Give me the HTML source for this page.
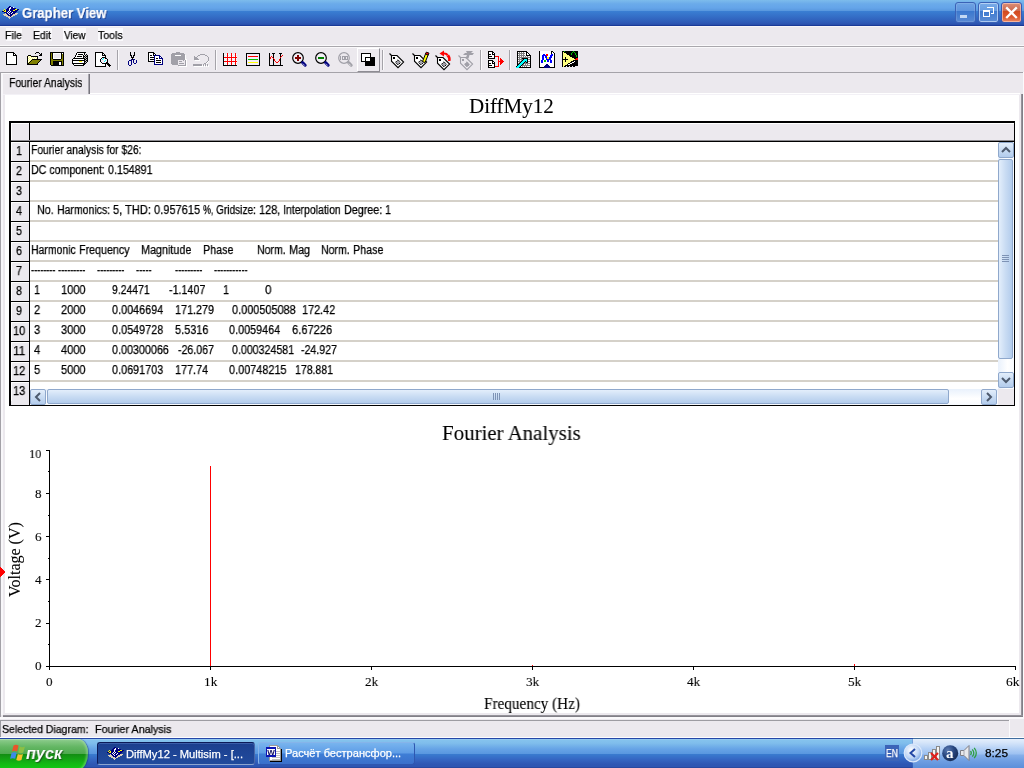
<!DOCTYPE html>
<html lang="ru"><head><meta charset="utf-8"><title>Grapher View</title>
<style>
html,body{margin:0;padding:0;background:#ECE9EE;}
#scr{position:relative;width:1024px;height:768px;overflow:hidden;background:#ECE9EE;}
#scr div,#scr svg,#scr span{position:absolute;}
.t{will-change:transform;white-space:pre;line-height:normal;transform-origin:0 0;color:#000;}
.s{font-family:"Liberation Sans",sans-serif;-webkit-text-stroke:0.25px currentColor;}
.r{font-family:"Liberation Serif",serif;-webkit-text-stroke:0.1px currentColor;}
svg{overflow:visible;}
.ce{shape-rendering:crispEdges;}
#title{left:0;top:0;width:1024px;height:26px;background:linear-gradient(to bottom,#7DBCEC 0px,#6AAAEA 4px,#64A4E9 8px,#5A99DF 10.5px,#3A7FD3 11px,#3570C8 16px,#2E59B5 23px,#2A50AC 24.5px,#1A3A98 25px,#1A3A98 26px);}
.cb{top:2px;width:20px;height:20px;border-radius:3px;box-sizing:border-box;}
#task{left:0;top:738px;width:1024px;height:30px;background:linear-gradient(to bottom,#2647A8 0px,#2647A8 1px,#9CCCF2 1px,#84C2ED 2.5px,#80BEEC 5px,#66A3E6 11px,#5A98E0 15.5px,#397CD0 16px,#3568C4 21px,#2E57B4 26px,#2D55B2 28.5px,#28489F 29px);}
#tray{left:913px;top:739px;width:111px;height:29px;background:linear-gradient(to bottom,#E4EEFC 0px,#D4E4F9 4px,#B4D0F5 10px,#9DC1F1 15px,#86B0EA 16px,#6E9EE2 22px,#5C8FDA 29px);}
.tb{top:742px;height:23px;border-radius:3px;box-sizing:border-box;}
.row{left:30px;width:968px;height:2px;background:#D5D1C9;}
.rn{left:11px;width:18px;height:19px;background:#EBE9EE;border-top:1px solid #fff;border-left:1px solid #fff;box-sizing:border-box;}
.rl{left:11px;width:18px;height:1px;background:#000;}

</style></head>
<body>
<div id="scr">
<div id="title"></div><div style="left:0;top:26px;width:1024px;height:1px;background:#F7F5F8"></div><div class="cb" style="left:955px;width:21px;height:21px;background:linear-gradient(#6FA3E4 0,#5F95DD 41%,#3B78CE 44%,#5889D3 100%);border:1px solid #3A62B6;box-shadow:inset 0 0 0 1px rgba(255,255,255,.12)"></div><div style="left:960px;top:15px;width:7px;height:3px;background:#C4D9F4"></div><div class="cb" style="left:978px;width:21px;height:21px;background:linear-gradient(#79ACE8 0,#669CE1 41%,#3F7BD0 44%,#5C8DD5 100%);border:1px solid #3A62B6;box-shadow:inset 0 0 0 1px rgba(200,222,248,.75)"></div><svg class="ce" style="left:979px;top:2px" width="20" height="20"><path d="M8 5.5h6v6h-2" fill="none" stroke="#fff" stroke-width="1"/><rect x="4.5" y="8.5" width="6" height="6" fill="none" stroke="#fff" stroke-width="1"/><rect x="4" y="8" width="7" height="2" fill="#fff"/><rect x="7.5" y="4.7" width="7" height="1.6" fill="#fff"/></svg><div class="cb" style="left:1001px;width:21px;height:21px;background:linear-gradient(#DC8F78 0,#CC6A4F 41%,#D24A20 44%,#DC5A30 75%,#EA8864 100%);border:1px solid #3A58B0;box-shadow:inset 0 0 0 1px rgba(255,214,196,.6)"></div><svg style="left:1001px;top:2px" width="21" height="21"><path d="M5.200 5.400l10.600 10.600M15.800 5.400l-10.600 10.600" stroke="#fff" stroke-width="2.300" stroke-linecap="butt"/></svg><div style="left:6px;top:28px;width:16px;height:13px;background:#FAF9FC"></div><div style="left:34px;top:28px;width:18px;height:13px;background:#FAF9FC"></div><div style="left:63px;top:28px;width:23px;height:13px;background:#FAF9FC"></div><div style="left:98px;top:28px;width:25px;height:13px;background:#FAF9FC"></div><div style="left:0;top:45px;width:1024px;height:1px;background:#FAF9FB"></div><div style="left:0;top:46px;width:1024px;height:1px;background:#A9A7AC"></div><div style="left:0;top:47px;width:1024px;height:1px;background:#FAF9FB"></div><div style="left:117px;top:50px;width:1px;height:20px;background:#A5A3A9"></div><div style="left:118px;top:50px;width:1px;height:20px;background:#FBFAFC"></div><div style="left:215px;top:50px;width:1px;height:20px;background:#A5A3A9"></div><div style="left:216px;top:50px;width:1px;height:20px;background:#FBFAFC"></div><div style="left:382px;top:50px;width:1px;height:20px;background:#A5A3A9"></div><div style="left:383px;top:50px;width:1px;height:20px;background:#FBFAFC"></div><div style="left:480px;top:50px;width:1px;height:20px;background:#A5A3A9"></div><div style="left:481px;top:50px;width:1px;height:20px;background:#FBFAFC"></div><div style="left:509px;top:50px;width:1px;height:20px;background:#A5A3A9"></div><div style="left:510px;top:50px;width:1px;height:20px;background:#FBFAFC"></div><svg class="ce" style="left:0;top:0" width="1" height="1"><path d="M6 52.5h8M6 53.5h1M13 53.5h2M6 54.5h1M13 54.5h1M15 54.5h1M6 55.5h1M13 55.5h4M6 56.5h1M16 56.5h1M6 57.5h1M16 57.5h1M6 58.5h1M16 58.5h1M6 59.5h1M16 59.5h1M6 60.5h1M16 60.5h1M6 61.5h1M16 61.5h1M6 62.5h1M16 62.5h1M6 63.5h1M16 63.5h1M6 64.5h11" stroke="#000"/><path d="M7 53.5h6M7 54.5h6M14 54.5h1M7 55.5h6M7 56.5h9M7 57.5h9M7 58.5h9M7 59.5h9M7 60.5h9M7 61.5h9M7 62.5h9M7 63.5h9" stroke="#fff"/></svg><svg class="ce" style="left:0;top:0" width="1" height="1"><path d="M36 52.5h3M35 53.5h1M39 53.5h1M41 53.5h1M40 54.5h2M28 55.5h3M39 55.5h3M27 56.5h1M31 56.5h7M27 57.5h1M37 57.5h1M27 58.5h1M37 58.5h1M27 59.5h1M32 59.5h10M27 60.5h1M31 60.5h1M40 60.5h1M27 61.5h1M30 61.5h1M39 61.5h1M27 62.5h1M29 62.5h1M38 62.5h1M27 63.5h2M37 63.5h1M27 64.5h11" stroke="#000"/><path d="M28 56.5h1M30 56.5h1M29 57.5h1M31 57.5h1M33 57.5h1M35 57.5h1M28 58.5h1M30 58.5h1M32 58.5h1M34 58.5h1M36 58.5h1M29 59.5h1M31 59.5h1M28 60.5h1M30 60.5h1M29 61.5h1M28 62.5h1" stroke="#FFFF80"/><path d="M29 56.5h1M28 57.5h1M30 57.5h1M32 57.5h1M34 57.5h1M36 57.5h1M29 58.5h1M31 58.5h1M33 58.5h1M35 58.5h1M28 59.5h1M30 59.5h1M29 60.5h1M28 61.5h1" stroke="#fff"/><path d="M32 60.5h8M31 61.5h8M30 62.5h8M29 63.5h8" stroke="#808000"/></svg><svg class="ce" style="left:0;top:0" width="1" height="1"><path d="M50 52.5h14M50 53.5h1M52 53.5h1M61 53.5h1M63 53.5h1M50 54.5h1M52 54.5h1M61 54.5h1M63 54.5h1M50 55.5h1M52 55.5h1M61 55.5h1M63 55.5h1M50 56.5h1M52 56.5h1M61 56.5h1M63 56.5h1M50 57.5h1M52 57.5h1M61 57.5h1M63 57.5h1M50 58.5h1M52 58.5h1M61 58.5h1M63 58.5h1M50 59.5h1M53 59.5h8M63 59.5h1M50 60.5h1M63 60.5h1M50 61.5h1M53 61.5h9M63 61.5h1M50 62.5h1M53 62.5h6M61 62.5h1M63 62.5h1M50 63.5h1M53 63.5h6M61 63.5h1M63 63.5h1M50 64.5h1M53 64.5h6M61 64.5h1M63 64.5h1M51 65.5h13" stroke="#000"/><path d="M51 53.5h1M51 54.5h1M62 54.5h1M51 55.5h1M62 55.5h1M51 56.5h1M62 56.5h1M51 57.5h1M62 57.5h1M51 58.5h1M62 58.5h1M51 59.5h2M61 59.5h2M51 60.5h12M51 61.5h2M62 61.5h1M51 62.5h2M62 62.5h1M51 63.5h2M62 63.5h1M51 64.5h2M62 64.5h1" stroke="#808000"/><path d="M53 53.5h8M53 54.5h1M60 54.5h1M53 55.5h1M60 55.5h1M53 56.5h1M60 56.5h1M53 57.5h1M60 57.5h1M53 58.5h8" stroke="#fff"/><path d="M62 53.5h1M59 62.5h2M59 63.5h2M59 64.5h2" stroke="#fff"/><path d="M54 54.5h6M54 55.5h6M54 56.5h6M54 57.5h6" stroke="#ECE9EE"/></svg><svg class="ce" style="left:0;top:0" width="1" height="1"><path d="M77 52.5h9M76 53.5h1M84 53.5h1M76 54.5h1M78 54.5h5M84 54.5h1M86 54.5h1M75 55.5h1M83 55.5h1M85 55.5h1M87 55.5h1M75 56.5h1M77 56.5h5M83 56.5h2M86 56.5h2M74 57.5h1M83 57.5h1M85 57.5h1M87 57.5h1M73 58.5h12M86 58.5h2M72 59.5h1M84 59.5h2M87 59.5h1M72 60.5h13M86 60.5h2M72 61.5h1M84 61.5h2M87 61.5h1M72 62.5h1M84 62.5h1M86 62.5h1M72 63.5h14M73 64.5h1M83 64.5h2M74 65.5h10" stroke="#000"/><path d="M77 53.5h7M77 54.5h1M83 54.5h1M76 55.5h7M76 56.5h1M82 56.5h1M75 57.5h8M73 59.5h11M73 61.5h6M82 61.5h2M73 62.5h11M74 64.5h9" stroke="#fff"/><path d="M86 55.5h1M85 56.5h1M84 57.5h1M86 57.5h1M85 58.5h1M86 59.5h1M85 60.5h1M86 61.5h1M85 62.5h1" stroke="#C0C0C0"/><path d="M79 61.5h3" stroke="#FFFF00"/></svg><svg class="ce" style="left:0;top:0" width="1" height="1"><path d="M95 52.5h8M95 53.5h1M102 53.5h2M95 54.5h1M102 54.5h1M104 54.5h1M95 55.5h1M102 55.5h4M95 56.5h1M105 56.5h1M95 57.5h1M102 57.5h4M95 58.5h1M101 58.5h1M105 58.5h2M95 59.5h1M100 59.5h1M107 59.5h1M95 60.5h1M100 60.5h1M107 60.5h1M95 61.5h1M100 61.5h1M107 61.5h1M95 62.5h1M101 62.5h1M106 62.5h2M95 63.5h1M102 63.5h7M95 64.5h1M105 64.5h1M107 64.5h3M95 65.5h1M105 65.5h1M108 65.5h3M95 66.5h11M109 66.5h1" stroke="#000"/><path d="M96 53.5h6M96 54.5h6M103 54.5h1M96 55.5h6M96 56.5h9M96 57.5h6M96 58.5h5M96 59.5h4M96 60.5h4M96 61.5h4M96 62.5h5M96 63.5h6M96 64.5h9M96 65.5h9" stroke="#fff"/><path d="M102 58.5h1M104 58.5h1M101 59.5h1M103 59.5h4M101 60.5h4M106 60.5h1M101 61.5h3M105 61.5h2M102 62.5h4" stroke="#F4EEF8"/><path d="M103 58.5h1M102 59.5h1M105 60.5h1M104 61.5h1" stroke="#00FFFF"/></svg><svg class="ce" style="left:0;top:0" width="1" height="1"><path d="M130 52.5h1M134 52.5h1M130 53.5h1M134 53.5h1M130 54.5h1M134 54.5h1M130 55.5h2M133 55.5h2M131 56.5h1M133 56.5h1M131 57.5h3M132 58.5h1M132 59.5h1" stroke="#000"/><path d="M131 59.5h1M133 59.5h2M129 60.5h3M133 60.5h1M136 60.5h1M128 61.5h1M131 61.5h1M133 61.5h1M136 61.5h1M128 62.5h1M131 62.5h1M133 62.5h1M136 62.5h1M128 63.5h1M131 63.5h1M134 63.5h2M128 64.5h1M131 64.5h1M129 65.5h2" stroke="#000080"/></svg><svg class="ce" style="left:0;top:0" width="1" height="1"><path d="M148 52.5h6M148 53.5h1M153 53.5h2M148 54.5h1M153 54.5h1M155 54.5h1M148 55.5h1M150 55.5h2M153 55.5h1M148 56.5h1M148 57.5h1M150 57.5h4M148 58.5h1M156 58.5h2M148 59.5h1M150 59.5h4M148 60.5h1M156 60.5h5M148 61.5h6M156 62.5h5" stroke="#000"/><path d="M149 53.5h4M149 54.5h4M154 54.5h1M149 55.5h1M152 55.5h1M149 56.5h5M155 56.5h4M149 57.5h1M155 57.5h4M160 57.5h1M149 58.5h5M155 58.5h1M158 58.5h1M149 59.5h1M155 59.5h7M149 60.5h5M155 60.5h1M161 60.5h1M155 61.5h7M155 62.5h1M161 62.5h1M155 63.5h7" stroke="#fff"/><path d="M154 55.5h6M154 56.5h1M159 56.5h2M154 57.5h1M159 57.5h1M161 57.5h1M154 58.5h1M159 58.5h4M154 59.5h1M162 59.5h1M154 60.5h1M162 60.5h1M154 61.5h1M162 61.5h1M154 62.5h1M162 62.5h1M154 63.5h1M162 63.5h1M154 64.5h9" stroke="#000080"/></svg><svg class="ce" style="left:0;top:0" width="1" height="1"><path d="M176 52.5h4M172 53.5h12M171 54.5h14M171 55.5h4M181 55.5h4M171 56.5h14M171 57.5h14M171 58.5h14M171 59.5h14M171 60.5h7M183 60.5h1M185 60.5h1M171 61.5h7M179 61.5h3M185 61.5h1M171 62.5h7M185 62.5h1M171 63.5h7M179 63.5h5M185 63.5h1M172 64.5h6M185 64.5h1M178 65.5h8" stroke="#A1A0A8"/><path d="M175 55.5h6" stroke="#fff"/><path d="M185 55.5h1M185 56.5h1M185 57.5h1M185 58.5h1M185 59.5h2M186 60.5h1M186 61.5h1M186 62.5h1M186 63.5h1M186 64.5h1M186 65.5h1M179 66.5h8" stroke="#fff"/><path d="M178 60.5h5M184 60.5h1M178 61.5h1M182 61.5h3M178 62.5h7M178 63.5h1M184 63.5h1M178 64.5h7" stroke="#ECE9EE"/></svg><svg class="ce" style="left:0;top:0" width="1" height="1"><path d="M200 54.5h5M198 55.5h2M205 55.5h2M194 56.5h1M197 56.5h1M207 56.5h1M194 57.5h3M208 57.5h1M194 58.5h4M208 58.5h1M194 59.5h5M208 59.5h1M208 60.5h1M207 61.5h1M206 62.5h1M204 63.5h2M193 64.5h9M203 64.5h1M205 64.5h1M207 64.5h1M193 65.5h9M203 65.5h1M205 65.5h1M207 65.5h1" stroke="#A1A0A8"/><path d="M195 60.5h5M208 61.5h1M207 62.5h1M206 63.5h1M202 65.5h1M204 65.5h1M206 65.5h1M208 65.5h1M194 66.5h9M204 66.5h1M206 66.5h1M208 66.5h1" stroke="#fff"/></svg><svg class="ce" style="left:0;top:0" width="1" height="1"><path d="M223 53.5h1M223 54.5h1M223 55.5h1M223 56.5h1M223 57.5h1M223 58.5h1M223 59.5h1M223 60.5h1M223 61.5h1M223 62.5h1M223 63.5h1M223 64.5h1M223 65.5h14" stroke="#000"/><path d="M227 53.5h1M231 53.5h1M235 53.5h1M227 54.5h1M231 54.5h1M235 54.5h1M227 55.5h1M231 55.5h1M235 55.5h1M227 56.5h1M231 56.5h1M235 56.5h1M224 57.5h13M227 58.5h1M231 58.5h1M235 58.5h1M227 59.5h1M231 59.5h1M235 59.5h1M227 60.5h1M231 60.5h1M235 60.5h1M224 61.5h13M227 62.5h1M231 62.5h1M235 62.5h1M227 63.5h1M231 63.5h1M235 63.5h1M227 64.5h1M231 64.5h1M235 64.5h1" stroke="#FF0000"/><path d="M224 54.5h1M226 54.5h1M228 54.5h1M230 54.5h1M232 54.5h1M234 54.5h1M236 54.5h1M225 55.5h1M229 55.5h1M233 55.5h1M224 56.5h1M226 56.5h1M228 56.5h1M230 56.5h1M232 56.5h1M234 56.5h1M236 56.5h1M224 58.5h1M226 58.5h1M228 58.5h1M230 58.5h1M232 58.5h1M234 58.5h1M236 58.5h1M225 59.5h1M229 59.5h1M233 59.5h1M224 60.5h1M226 60.5h1M228 60.5h1M230 60.5h1M232 60.5h1M234 60.5h1M236 60.5h1M224 62.5h1M226 62.5h1M228 62.5h1M230 62.5h1M232 62.5h1M234 62.5h1M236 62.5h1M225 63.5h1M229 63.5h1M233 63.5h1M224 64.5h1M226 64.5h1M228 64.5h1M230 64.5h1M232 64.5h1M234 64.5h1M236 64.5h1" stroke="#fff"/><path d="M225 54.5h1M229 54.5h1M233 54.5h1M224 55.5h1M226 55.5h1M228 55.5h1M230 55.5h1M232 55.5h1M234 55.5h1M236 55.5h1M225 56.5h1M229 56.5h1M233 56.5h1M225 58.5h1M229 58.5h1M233 58.5h1M224 59.5h1M226 59.5h1M228 59.5h1M230 59.5h1M232 59.5h1M234 59.5h1M236 59.5h1M225 60.5h1M229 60.5h1M233 60.5h1M225 62.5h1M229 62.5h1M233 62.5h1M224 63.5h1M226 63.5h1M228 63.5h1M230 63.5h1M232 63.5h1M234 63.5h1M236 63.5h1M225 64.5h1M229 64.5h1M233 64.5h1" stroke="#EAE8F0"/></svg><svg class="ce" style="left:0;top:0" width="1" height="1"><path d="M246 53.5h14M246 54.5h1M259 54.5h1M246 55.5h1M259 55.5h1M246 56.5h1M259 56.5h1M246 57.5h1M259 57.5h1M246 58.5h1M259 58.5h1M246 59.5h1M259 59.5h1M246 60.5h1M259 60.5h1M246 61.5h1M259 61.5h1M246 62.5h1M259 62.5h1M246 63.5h1M259 63.5h1M246 64.5h1M259 64.5h1M246 65.5h14" stroke="#000"/><path d="M247 54.5h12M247 55.5h12M247 56.5h1M258 56.5h1M247 57.5h12M247 58.5h12M247 59.5h1M258 59.5h1M247 60.5h12M247 61.5h12M247 62.5h1M258 62.5h1M247 63.5h12M247 64.5h12" stroke="#F4EEF8"/><path d="M248 56.5h10" stroke="#FF0000"/><path d="M248 59.5h10" stroke="#00C000"/><path d="M248 62.5h10" stroke="#FFFF00"/></svg><svg class="ce" style="left:0;top:0" width="1" height="1"><path d="M269 53.5h1M272 53.5h3M279 53.5h3M269 54.5h1M273 54.5h1M280 54.5h1M269 55.5h1M273 55.5h1M280 55.5h1M269 56.5h1M273 56.5h1M280 56.5h1M269 57.5h1M273 57.5h1M269 58.5h1M280 58.5h1M269 59.5h1M273 59.5h1M280 59.5h1M269 60.5h1M273 60.5h1M280 60.5h1M269 61.5h1M273 61.5h1M280 61.5h1M269 62.5h1M273 62.5h1M280 62.5h1M269 63.5h1M273 63.5h1M280 63.5h1M269 64.5h1M273 64.5h1M280 64.5h1M269 65.5h14" stroke="#000"/><path d="M282 55.5h1M271 56.5h1M281 56.5h1M270 57.5h1M272 57.5h1M280 57.5h1M270 58.5h1M273 58.5h1M274 59.5h1M279 59.5h1M274 60.5h1M279 60.5h1M275 61.5h1M278 61.5h1M276 62.5h2" stroke="#FF0000"/></svg><svg style="left:290px;top:50px" width="20" height="20"><circle cx="8" cy="8" r="5.3" fill="#F3F0F6" stroke="#000" stroke-width="1.2"/><path d="M12.6 12.6l2.600 2.600" stroke="#000080" stroke-width="3" stroke-linecap="round"/><path d="M12.800 13.600l2 2" stroke="#fff" stroke-width="0.8" opacity="0.8"/><path class="ce" d="M5 8h6M8 5v6" stroke="#800000" stroke-width="2"/></svg><svg style="left:313px;top:50px" width="20" height="20"><circle cx="8" cy="8" r="5.3" fill="#F3F0F6" stroke="#000" stroke-width="1.2"/><path d="M12.6 12.6l2.600 2.600" stroke="#000080" stroke-width="3" stroke-linecap="round"/><path d="M12.800 13.600l2 2" stroke="#fff" stroke-width="0.8" opacity="0.8"/><path class="ce" d="M5 8h6" stroke="#008000" stroke-width="2"/></svg><svg style="left:336px;top:50px" width="20" height="20"><circle cx="8" cy="8" r="5.3" fill="#ECE9EE" stroke="#A1A0A8" stroke-width="1.2"/><path d="M12.6 12.6l2.600 2.600" stroke="#A1A0A8" stroke-width="3" stroke-linecap="round"/><path d="M12.800 13.600l2 2" stroke="#fff" stroke-width="0.8" opacity="0.8"/><path class="ce" d="M4.5 6v4M6.5 6.5h2v3h-2zM9.5 6.5h2v3h-2z" stroke="#A1A0A8" fill="none"/></svg><div style="left:357px;top:48px;width:23px;height:24px;box-sizing:border-box;border-left:1px solid #fff;border-top:1px solid #fff;border-right:1px solid #8E8C93;border-bottom:1px solid #8E8C93;background:#EDEAEF"></div><svg class="ce" style="left:0;top:0" width="1" height="1"><path d="M361 53.5h10M361 54.5h1M370 54.5h1M361 55.5h1M370 55.5h1M361 56.5h1M370 56.5h1M361 57.5h1M365 57.5h10M361 58.5h1M365 58.5h1M370 58.5h5M361 59.5h1M365 59.5h1M370 59.5h5M361 60.5h1M365 60.5h1M370 60.5h5M361 61.5h14M365 62.5h10M365 63.5h10M365 64.5h10M365 65.5h10" stroke="#000"/><path d="M362 54.5h8M362 55.5h8M362 56.5h8M362 57.5h3M362 58.5h3M366 58.5h4M362 59.5h3M366 59.5h4M362 60.5h3M366 60.5h4" stroke="#fff"/></svg><svg style="left:389px;top:53px" width="18" height="18"><path d="M0.5 0.5l2 2" stroke="#000" stroke-width="1.1"/><path d="M2.5 2.5h5.5l6.6 6.6-5.6 5.6-6.5-6.5z" fill="#fff" stroke="#000" stroke-width="1.1" stroke-linejoin="miter"/><rect class="ce" x="4" y="4" width="2" height="2" fill="#000"/><path d="M9 6.8l2.6 2.6-2.6 2.6-2.6-2.6z" fill="#A1A0A8" stroke="#000" stroke-width="1" stroke-dasharray="1.5 0.8"/></svg><svg style="left:412px;top:53px" width="18" height="18"><path d="M0.5 0.5l2 2" stroke="#000" stroke-width="1.1"/><path d="M2.5 2.5h5.5l6.6 6.6-5.6 5.6-6.5-6.5z" fill="#fff" stroke="#000" stroke-width="1.1" stroke-linejoin="miter"/><rect class="ce" x="4" y="4" width="2" height="2" fill="#000"/><path d="M9 6.8l2.6 2.6-2.6 2.6-2.6-2.6z" fill="#A1A0A8" stroke="#000" stroke-width="1" stroke-dasharray="1.5 0.8"/></svg><svg style="left:412px;top:50px" width="20" height="20"><path d="M10.5 11.5l3.2-8 2.6 1-3.2 8z" fill="#FFFF00" stroke="#000" stroke-width="1"/><path d="M13.4 4l1-1.9 2.6 1-.8 2z" fill="#FF0000" stroke="#000" stroke-width="0.9"/></svg><svg style="left:435px;top:55px" width="18" height="18"><path d="M0.5 0.5l2 2" stroke="#000" stroke-width="1.1"/><path d="M2.5 2.5h5.5l6.6 6.6-5.6 5.6-6.5-6.5z" fill="#fff" stroke="#000" stroke-width="1.1" stroke-linejoin="miter"/><rect class="ce" x="4" y="4" width="2" height="2" fill="#000"/><path d="M9 6.8l2.6 2.6-2.6 2.6-2.6-2.6z" fill="#A1A0A8" stroke="#000" stroke-width="1" stroke-dasharray="1.5 0.8"/></svg><svg style="left:435px;top:50px" width="20" height="20"><path d="M4.500 3.500l4.500-3v2c2.200 0 3.600 .8 4.300 2.200l-1.800 1c-.5-.9-1.300-1.300-2.500-1.300v2z" fill="#FF0000"/><path d="M11.500 6l2.500-1.500c1.500 1.800 2 4 1.500 6.500h-2.500c.4-1.900 0-3.500-1.500-5z" fill="#FF0000"/></svg><svg style="left:458px;top:55px" width="18" height="18"><path d="M0.5 0.5l2 2" stroke="#A1A0A8" stroke-width="1.1"/><path d="M2.5 2.5h5.5l6.6 6.6-5.6 5.6-6.5-6.5z" fill="#ECE9EE" stroke="#A1A0A8" stroke-width="1.1" stroke-linejoin="miter"/><rect class="ce" x="4" y="4" width="2" height="2" fill="#A1A0A8"/><path d="M9 6.8l2.6 2.6-2.6 2.6-2.6-2.6z" fill="#A1A0A8" stroke="#A1A0A8" stroke-width="1" stroke-dasharray="1.5 0.8"/></svg><svg style="left:458px;top:50px" width="20" height="20"><path d="M8 1h7l-2 2h3l-1.5 2h-3l-1 3.5h-3l1.5-3.5h-4l2-2h2z" fill="#A1A0A8"/></svg><svg class="ce" style="left:0;top:0" width="1" height="1"><path d="M488 51.5h5M488 52.5h1M492 52.5h2M488 53.5h1M492 53.5h1M494 53.5h1M488 54.5h3M492 54.5h3M488 55.5h1M494 55.5h1M488 56.5h4M494 56.5h1M488 57.5h1M494 57.5h1M488 58.5h7M488 60.5h5M488 61.5h1M492 61.5h2M488 62.5h1M492 62.5h1M494 62.5h1M488 63.5h3M492 63.5h3M488 64.5h1M494 64.5h1M488 65.5h4M494 65.5h1M488 66.5h1M494 66.5h1M488 67.5h7" stroke="#000"/><path d="M489 52.5h3M489 53.5h3M493 53.5h1M491 54.5h1M489 55.5h5M492 56.5h2M489 57.5h5M489 61.5h3M489 62.5h3M493 62.5h1M491 63.5h1M489 64.5h5M492 65.5h2M489 66.5h5" stroke="#fff"/><path d="M495 56.5h4M498 57.5h1M498 58.5h1M500 58.5h1M498 59.5h1M500 59.5h2M498 60.5h1M500 60.5h3M498 61.5h6M498 62.5h1M500 62.5h3M498 63.5h1M500 63.5h2M498 64.5h1M500 64.5h1M498 65.5h1M495 66.5h4" stroke="#FF0000"/></svg><svg class="ce" style="left:0;top:0" width="1" height="1"><path d="M517 51.5h10M517 52.5h1M526 52.5h2M517 53.5h1M526 53.5h1M528 53.5h1M517 54.5h1M526 54.5h1M529 54.5h1M517 55.5h1M526 55.5h5M517 56.5h1M530 56.5h1M517 57.5h1M530 57.5h1M517 58.5h1M522 58.5h6M530 58.5h1M517 59.5h1M523 59.5h1M527 59.5h1M530 59.5h1M517 60.5h1M522 60.5h1M527 60.5h1M530 60.5h1M517 61.5h1M521 61.5h1M525 61.5h1M527 61.5h1M530 61.5h1M517 62.5h1M520 62.5h1M524 62.5h1M526 62.5h2M530 62.5h1M517 63.5h1M519 63.5h1M523 63.5h1M530 63.5h1M517 64.5h2M522 64.5h1M530 64.5h1M517 65.5h1M521 65.5h1M530 65.5h1M516 66.5h1M520 66.5h1M530 66.5h1M519 67.5h12" stroke="#000"/><path d="M518 52.5h1M520 52.5h1M522 52.5h1M524 52.5h2M525 53.5h1M527 53.5h1M518 54.5h1M520 54.5h1M522 54.5h1M524 54.5h2M527 54.5h2M525 55.5h1M518 56.5h1M520 56.5h1M522 56.5h1M524 56.5h1M526 56.5h1M528 56.5h2M518 58.5h1M520 58.5h1M528 58.5h2M518 60.5h1M520 60.5h1M528 60.5h2M518 62.5h1M528 62.5h2M524 64.5h1M526 64.5h1M528 64.5h2M521 66.5h1M523 66.5h1M525 66.5h1M527 66.5h3" stroke="#fff"/><path d="M519 52.5h1M521 52.5h1M523 52.5h1M518 53.5h7M519 54.5h1M521 54.5h1M523 54.5h1M518 55.5h7M519 56.5h1M521 56.5h1M523 56.5h1M525 56.5h1M527 56.5h1M518 57.5h12M519 58.5h1M521 58.5h1M518 59.5h5M528 59.5h2M519 60.5h1M521 60.5h1M518 61.5h3M528 61.5h2M519 62.5h1M525 62.5h1M518 63.5h1M524 63.5h6M523 64.5h1M525 64.5h1M527 64.5h1M522 65.5h8M522 66.5h1M524 66.5h1M526 66.5h1" stroke="#808080"/><path d="M524 59.5h3M523 60.5h4M522 61.5h3M526 61.5h1M521 62.5h3M520 63.5h3M519 64.5h3M518 65.5h3M517 66.5h3M516 67.5h3" stroke="#00FFFF"/></svg><svg class="ce" style="left:0;top:0" width="1" height="1"><path d="M539 51.5h1M551 51.5h2M539 52.5h1M551 52.5h1M553 52.5h1M539 53.5h1M551 53.5h1M554 53.5h1M539 54.5h1M554 54.5h1M539 55.5h1M554 55.5h1M539 56.5h1M554 56.5h1M539 57.5h1M554 57.5h1M539 58.5h1M554 58.5h1M539 59.5h1M554 59.5h1M539 60.5h1M554 60.5h1M539 61.5h1M554 61.5h1M539 62.5h1M554 62.5h1M539 63.5h1M554 63.5h1M539 64.5h1M554 64.5h1M539 65.5h1M554 65.5h1M539 66.5h1M554 66.5h1M539 67.5h5M550 67.5h5" stroke="#000"/><path d="M540 51.5h11M540 52.5h11M552 52.5h1M540 53.5h11M552 53.5h2M540 54.5h3M545 54.5h1M548 54.5h3M553 54.5h1M540 55.5h2M548 55.5h2M553 55.5h1M540 56.5h2M544 56.5h1M547 56.5h3M552 56.5h2M540 57.5h2M544 57.5h1M552 57.5h2M540 58.5h2M544 58.5h2M551 58.5h3M540 59.5h2M544 59.5h2M551 59.5h3M540 60.5h1M543 60.5h1M546 60.5h1M549 60.5h1M552 60.5h2M540 61.5h1M543 61.5h1M546 61.5h1M549 61.5h1M552 61.5h2M540 62.5h1M543 62.5h7M552 62.5h2M540 63.5h14M540 64.5h6M548 64.5h6M540 65.5h5M549 65.5h5M540 66.5h4M550 66.5h4" stroke="#fff"/><path d="M543 54.5h2M551 54.5h2M542 55.5h4M550 55.5h3M542 56.5h2M545 56.5h2M550 56.5h2M542 57.5h2M545 57.5h2M549 57.5h3M542 58.5h2M546 58.5h1M549 58.5h2M542 59.5h2M546 59.5h5M541 60.5h2M547 60.5h2M550 60.5h2M541 61.5h2M547 61.5h2M550 61.5h2M541 62.5h2M550 62.5h2" stroke="#0000FF"/><path d="M546 54.5h2M546 55.5h2" stroke="#FF0000"/><path d="M547 57.5h2M547 58.5h2" stroke="#FFFF00"/><path d="M544 60.5h2M544 61.5h2" stroke="#00C000"/><path d="M546 64.5h2M545 65.5h4M544 66.5h6M544 67.5h6" stroke="#000080"/></svg><svg class="ce" style="left:0;top:0" width="1" height="1"><path d="M562 51.5h2M565 51.5h8M574 51.5h4M562 52.5h1M564 52.5h8M573 52.5h1M575 52.5h3M562 53.5h1M566 53.5h5M572 53.5h3M576 53.5h2M562 54.5h1M567 54.5h4M572 54.5h3M576 54.5h2M562 55.5h1M569 55.5h7M577 55.5h1M562 56.5h1M570 56.5h6M577 56.5h1M562 57.5h1M565 57.5h1M572 57.5h6M562 58.5h1M565 58.5h1M574 58.5h2M562 59.5h6M562 60.5h1M565 60.5h1M573 60.5h5M562 61.5h1M565 61.5h1M571 61.5h3M575 61.5h3M562 62.5h1M570 62.5h2M574 62.5h4M562 63.5h1M568 63.5h2M572 63.5h6M562 64.5h1M567 64.5h1M570 64.5h8M562 65.5h1M565 65.5h13M562 66.5h1M564 66.5h2M567 66.5h2M570 66.5h2M573 66.5h2" stroke="#000"/><path d="M564 51.5h1M573 51.5h1M572 52.5h1M574 52.5h1M571 53.5h1M575 53.5h1M571 54.5h1M575 54.5h1M576 55.5h1M576 56.5h1" stroke="#00C000"/><path d="M563 52.5h1M563 53.5h3M563 54.5h4M563 55.5h6M563 56.5h7M563 57.5h2M566 57.5h6M563 58.5h2M566 58.5h8M568 59.5h7M563 60.5h2M566 60.5h7M563 61.5h2M566 61.5h5M563 62.5h7M563 63.5h5M563 64.5h4M563 65.5h2M563 66.5h1" stroke="#FFFF80"/><path d="M576 58.5h2M575 59.5h3" stroke="#FF0000"/><path d="M574 61.5h1M572 62.5h2M570 63.5h2M568 64.5h2" stroke="#fff"/></svg><div style="left:0;top:72px;width:1023px;height:1px;background:#A5A3A9"></div><div style="left:1023px;top:72px;width:1px;height:647px;background:#FBFAFC"></div><div style="left:0;top:73px;width:1px;height:644px;background:#A3A1A7"></div><div style="left:1px;top:73px;width:2px;height:642px;background:#F8F7FA"></div><div style="left:1px;top:73px;width:87px;height:1px;background:#FBFAFC"></div><div style="left:88px;top:74px;width:1px;height:20px;background:#A9A7AE"></div><div style="left:89px;top:74px;width:1px;height:20px;background:#77757D"></div><div style="left:90px;top:93px;width:930px;height:1px;background:#FFFFFF"></div><div style="left:3px;top:94px;width:1017px;height:1px;background:#F3F1F6"></div><div style="left:5px;top:95px;width:1014px;height:618px;background:#fff"></div><div style="left:1021px;top:94px;width:2px;height:623px;background:linear-gradient(to right,#9F9DA4,#77757D)"></div><div style="left:3px;top:715px;width:1020px;height:2px;background:linear-gradient(to bottom,#9F9DA4,#77757D)"></div><div style="left:0;top:717px;width:1024px;height:2px;background:#FAF9FB"></div><div style="left:9px;top:121px;width:1006px;height:285px;background:#000"></div><div style="left:11px;top:123px;width:1003px;height:17px;background:#ECE9EE"></div><div style="left:11px;top:140px;width:1003px;height:1px;background:#8C8A8F"></div><div style="left:29px;top:123px;width:1px;height:17px;background:#000"></div><div style="left:11px;top:142px;width:18px;height:263px;background:#EBE9EE"></div><div style="left:30px;top:142px;width:968px;height:247px;background:#fff"></div><div style="left:11px;top:142px;width:18px;height:1px;background:#fff"></div><div style="left:11px;top:142px;width:1px;height:19px;background:#fff"></div><div class="rl" style="top:161px"></div><div class="row" style="top:160px"></div><div style="left:11px;top:162px;width:18px;height:1px;background:#fff"></div><div style="left:11px;top:162px;width:1px;height:19px;background:#fff"></div><div class="rl" style="top:181px"></div><div class="row" style="top:180px"></div><div style="left:11px;top:182px;width:18px;height:1px;background:#fff"></div><div style="left:11px;top:182px;width:1px;height:19px;background:#fff"></div><div class="rl" style="top:201px"></div><div class="row" style="top:200px"></div><div style="left:11px;top:202px;width:18px;height:1px;background:#fff"></div><div style="left:11px;top:202px;width:1px;height:19px;background:#fff"></div><div class="rl" style="top:221px"></div><div class="row" style="top:220px"></div><div style="left:11px;top:222px;width:18px;height:1px;background:#fff"></div><div style="left:11px;top:222px;width:1px;height:19px;background:#fff"></div><div class="rl" style="top:241px"></div><div class="row" style="top:240px"></div><div style="left:11px;top:242px;width:18px;height:1px;background:#fff"></div><div style="left:11px;top:242px;width:1px;height:19px;background:#fff"></div><div class="rl" style="top:261px"></div><div class="row" style="top:260px"></div><div style="left:11px;top:262px;width:18px;height:1px;background:#fff"></div><div style="left:11px;top:262px;width:1px;height:19px;background:#fff"></div><div class="rl" style="top:281px"></div><div class="row" style="top:280px"></div><div style="left:11px;top:282px;width:18px;height:1px;background:#fff"></div><div style="left:11px;top:282px;width:1px;height:19px;background:#fff"></div><div class="rl" style="top:301px"></div><div class="row" style="top:300px"></div><div style="left:11px;top:302px;width:18px;height:1px;background:#fff"></div><div style="left:11px;top:302px;width:1px;height:19px;background:#fff"></div><div class="rl" style="top:321px"></div><div class="row" style="top:320px"></div><div style="left:11px;top:322px;width:18px;height:1px;background:#fff"></div><div style="left:11px;top:322px;width:1px;height:19px;background:#fff"></div><div class="rl" style="top:341px"></div><div class="row" style="top:340px"></div><div style="left:11px;top:342px;width:18px;height:1px;background:#fff"></div><div style="left:11px;top:342px;width:1px;height:19px;background:#fff"></div><div class="rl" style="top:361px"></div><div class="row" style="top:360px"></div><div style="left:11px;top:362px;width:18px;height:1px;background:#fff"></div><div style="left:11px;top:362px;width:1px;height:19px;background:#fff"></div><div class="rl" style="top:381px"></div><div class="row" style="top:380px"></div><div style="left:11px;top:382px;width:18px;height:1px;background:#fff"></div><div style="left:11px;top:382px;width:1px;height:19px;background:#fff"></div><div style="left:11px;top:123px;width:18px;height:1px;background:#fff"></div><div style="left:11px;top:123px;width:1px;height:17px;background:#fff"></div><div style="left:30px;top:123px;width:984px;height:1px;background:#fff"></div><div style="left:998px;top:142px;width:16px;height:247px;background:linear-gradient(to right,#E9F1FC,#FFFFFF 60%,#F7FAFE)"></div><div style="left:30px;top:389px;width:968px;height:16px;background:linear-gradient(to bottom,#E9F1FC,#FFFFFF 60%,#F7FAFE)"></div><div style="left:998px;top:389px;width:16px;height:16px;background:#ECE9EE"></div><div style="left:998px;top:142px;width:16px;height:16px;background:linear-gradient(to bottom,#E3EEFB 0,#C9DCF3 50%,#B3CCEC 100%);border:1px solid #8FA8CC;border-radius:2px;box-sizing:border-box;"></div><div style="left:998px;top:372px;width:16px;height:16px;background:linear-gradient(to bottom,#E3EEFB 0,#C9DCF3 50%,#B3CCEC 100%);border:1px solid #8FA8CC;border-radius:2px;box-sizing:border-box;"></div><div style="left:998px;top:159px;width:15px;height:200px;background:linear-gradient(to right,#E3EEFB 0,#C9DCF3 50%,#B3CCEC 100%);border:1px solid #8FA8CC;border-radius:2px;box-sizing:border-box;"></div><div style="left:30px;top:389px;width:16px;height:16px;background:linear-gradient(to bottom,#E3EEFB 0,#C9DCF3 50%,#B3CCEC 100%);border:1px solid #8FA8CC;border-radius:2px;box-sizing:border-box;"></div><div style="left:981px;top:389px;width:16px;height:16px;background:linear-gradient(to bottom,#E3EEFB 0,#C9DCF3 50%,#B3CCEC 100%);border:1px solid #8FA8CC;border-radius:2px;box-sizing:border-box;"></div><div style="left:47px;top:389px;width:902px;height:15px;background:linear-gradient(to bottom,#E3EEFB 0,#C9DCF3 50%,#B3CCEC 100%);border:1px solid #8FA8CC;border-radius:2px;box-sizing:border-box;"></div><svg style="left:998px;top:142px" width="16" height="16"><path d="M4 10l4-4 4 4" fill="none" stroke="#4D5A6E" stroke-width="2"/></svg><svg style="left:998px;top:372px" width="16" height="16"><path d="M4 6l4 4 4-4" fill="none" stroke="#4D5A6E" stroke-width="2"/></svg><svg style="left:30px;top:389px" width="16" height="16"><path d="M10 4l-4 4 4 4" fill="none" stroke="#4D5A6E" stroke-width="2"/></svg><svg style="left:981px;top:389px" width="16" height="16"><path d="M6 4l4 4-4 4" fill="none" stroke="#4D5A6E" stroke-width="2"/></svg><svg class="ce" style="left:1002px;top:255px" width="8" height="8"><path d="M0 .5h7M0 2.5h7M0 4.5h7M0 6.5h7" stroke="#7E93B5"/></svg><svg class="ce" style="left:493px;top:393px" width="8" height="8"><path d="M.5 0v7M2.5 0v7M4.5 0v7M6.5 0v7" stroke="#7E93B5"/></svg><svg class="ce" style="left:0;top:0" width="1024" height="768"><path d="M49.5 450v217M49 666.5h967" stroke="#000" fill="none"/><path d="M46 666.5h4" stroke="#000"/><path d="M48 644.5h2" stroke="#000"/><path d="M46 623.5h4" stroke="#000"/><path d="M48 601.5h2" stroke="#000"/><path d="M46 579.5h4" stroke="#000"/><path d="M48 558.5h2" stroke="#000"/><path d="M46 536.5h4" stroke="#000"/><path d="M48 515.5h2" stroke="#000"/><path d="M46 493.5h4" stroke="#000"/><path d="M48 471.5h2" stroke="#000"/><path d="M46 450.5h4" stroke="#000"/><path d="M49.5 667v3" stroke="#000"/><path d="M210.5 667v3" stroke="#000"/><path d="M371.5 667v3" stroke="#000"/><path d="M532.5 667v3" stroke="#000"/><path d="M693.5 667v3" stroke="#000"/><path d="M854.5 667v3" stroke="#000"/><path d="M1015.5 667v3" stroke="#000"/><path d="M210.5 466v200" stroke="#F00"/><path d="M532.5 665v1M854.5 664v2" stroke="#F00"/><path d="M0 567l5 5-5 5z" fill="#F00"/></svg><div style="left:0;top:720px;width:1009px;height:1px;background:#9D9CA2"></div><div style="left:0;top:720px;width:1px;height:17px;background:#9D9CA2"></div><div style="left:1009px;top:720px;width:1px;height:18px;background:#FBFAFC"></div><div style="left:0;top:737px;width:1024px;height:1px;background:#FDFDFE"></div><div id="task"></div><div id="tray"></div><div style="left:913px;top:738px;width:111px;height:1px;background:#3F6C9E"></div><div style="left:912px;top:739px;width:1px;height:29px;background:linear-gradient(#7FA9E0,#2B57B8)"></div><div style="left:-14px;top:739px;width:102px;height:31px;border-radius:0 10px 10px 0/0 14px 17px 0;overflow:hidden;background:linear-gradient(to bottom,#C4E6C4 0,#8DCC8D 1px,#84C784 2px,#63B663 8px,#4FAA4F 14.5px,#128C12 15px,#149E14 19px,#13BA13 25px,#12C612 29px);box-shadow:1px 0 1px rgba(20,60,120,.55),inset -2px 0 2px rgba(200,240,200,.35)"></div><svg style="left:10px;top:744px" width="18" height="18"><defs><filter id="bl"><feGaussianBlur stdDeviation="0.45"/></filter></defs><g filter="url(#bl)" transform="scale(1.1 1)"><path d="M3.2 1.400c1.600-1 3-.9 4.600 0L6.400 7.400c-1.500-.8-3-.8-4.600 0z" fill="#E8552C"/><path d="M8.800 2.500c1.600.9 3.200.9 4.800 0l-1.500 6c-1.600.9-3.100.8-4.700 0z" fill="#8CBF45"/><path d="M1.500 8.800c1.600-.9 3.100-.8 4.600 0L4.700 14.800c-1.500-.8-3-.8-4.600 0z" fill="#3B8BE6"/><path d="M7.100 9.900c1.500.9 3.100.9 4.700 0L10.400 16c-1.600.9-3.200.8-4.700 0z" fill="#F6C02F"/></g></svg><div class="tb" style="left:97px;width:158px;background:linear-gradient(#1C3F8E 0,#1E4596 50%,#214A9C 100%);border:1px solid #0C1A58;border-bottom-color:#8CA5D0;border-right-color:#4A68A8;box-shadow:inset 0 1px 0 rgba(90,125,195,.5)"></div><div class="tb" style="left:258px;width:157px;background:linear-gradient(#78B4EE 0,#5E9CE6 48%,#3E7ED6 52%,#3A6FCB 100%);border:1px solid #86B4EA;border-bottom-color:#2E57B0;border-right-color:#2E57B0"></div><svg class="ce" style="left:0;top:0" width="1" height="1"><path d="M9 6.5h2M8 7.5h2M11 7.5h2M7 8.5h2M11 8.5h5M6 9.5h3M10 9.5h5M17 9.5h2M4 10.5h1M6 10.5h3M10 10.5h3M15 10.5h3M2 11.5h2M6 11.5h2M9 11.5h1M11 11.5h6M4 12.5h3M8 12.5h1M10 12.5h2M13 12.5h3M6 13.5h2M9 13.5h2M12 13.5h3M7 14.5h2M10 14.5h3M8 15.5h4M10 16.5h1" stroke="#00007C"/><path d="M10 7.5h1M13 7.5h1M9 8.5h2M9 9.5h1M9 10.5h1M8 11.5h1M10 11.5h1M7 12.5h1M9 12.5h1M12 12.5h1M8 13.5h1M11 13.5h1M9 14.5h1" stroke="#fff"/><path d="M4 9.5h1M15 9.5h2M3 10.5h1M5 10.5h1M13 10.5h2M4 11.5h2" stroke="#FFFF00"/><path d="M5 13.5h1M15 13.5h3M3 14.5h4M13 14.5h4M4 15.5h4M12 15.5h3M6 16.5h4M11 16.5h2M8 17.5h3M9 18.5h1" stroke="#D9CFBC"/></svg><svg class="ce" style="left:0;top:0" width="1" height="1"><path d="M114 747.5h2M113 748.5h2M116 748.5h2M112 749.5h2M116 749.5h5M111 750.5h3M115 750.5h5M122 750.5h2M109 751.5h1M111 751.5h3M115 751.5h3M120 751.5h3M107 752.5h2M111 752.5h2M114 752.5h1M116 752.5h6M109 753.5h3M113 753.5h1M115 753.5h2M118 753.5h3M111 754.5h2M114 754.5h2M117 754.5h3M112 755.5h2M115 755.5h3M113 756.5h4M115 757.5h1" stroke="#00007C"/><path d="M115 748.5h1M118 748.5h1M114 749.5h2M114 750.5h1M114 751.5h1M113 752.5h1M115 752.5h1M112 753.5h1M114 753.5h1M117 753.5h1M113 754.5h1M116 754.5h1M114 755.5h1" stroke="#fff"/><path d="M109 750.5h1M120 750.5h2M108 751.5h1M110 751.5h1M118 751.5h2M109 752.5h2" stroke="#FFFF00"/><path d="M110 754.5h1M120 754.5h3M108 755.5h4M118 755.5h4M109 756.5h4M117 756.5h3M111 757.5h4M116 757.5h2M113 758.5h3M114 759.5h1" stroke="#D9CFBC"/></svg><svg class="ce" style="left:265px;top:745px;will-change:transform" width="18" height="17"><path d="M4.500 .5h8l3 3v12h-11z" fill="#fff" stroke="#9A9A9A"/><path d="M5 16.500h12M16.500 4v13" stroke="#000" fill="none"/><path d="M12.500 .5v3h3" fill="none" stroke="#9A9A9A"/><path d="M11 6.500h4M11 8.500h4M11 10.500h4M7 12.500h8M7 14.500h8" stroke="#C0C0C0"/><rect x="1.500" y="2.500" width="9" height="9" fill="#fff" stroke="#0A14B4"/><path d="M2 3.500h8M2 10.500h8" stroke="#0A14B4"/><text x="2.300" y="10" font-family="Liberation Sans, sans-serif" font-weight="bold" font-size="8" fill="#101060">W</text></svg><div style="left:885px;top:745px;width:14px;height:16px;background:#3B64B8"></div><svg style="left:903px;top:743px" width="20" height="20"><defs><radialGradient id="ag" cx="40%" cy="35%" r="70%"><stop offset="0" stop-color="#fff"/><stop offset="0.600" stop-color="#BFD6F6"/><stop offset="1" stop-color="#6C9BE0"/></radialGradient></defs><circle cx="10" cy="10" r="8.800" fill="url(#ag)" stroke="#DCE9FB" stroke-width="1.200"/><path d="M12 6l-4.500 4 4.500 4" fill="none" stroke="#2448A6" stroke-width="2"/></svg><svg class="ce" style="left:924px;top:746px" width="17" height="16"><rect x="0.500" y="9.500" width="3" height="4" fill="#F4F4F4" stroke="#8A8A8A"/><rect x="4.500" y="6.500" width="3" height="7" fill="#F4F4F4" stroke="#8A8A8A"/><rect x="8.500" y="3.500" width="3" height="10" fill="#F4F4F4" stroke="#8A8A8A"/><rect x="12.500" y="0.500" width="3" height="13" fill="#F4F4F4" stroke="#8A8A8A"/></svg><svg style="left:930px;top:752px" width="10" height="10"><path d="M1 1l7 7M8 1l-7 7" stroke="#E0201C" stroke-width="2.200"/></svg><svg style="left:942px;top:745px;will-change:transform" width="17" height="17"><defs><radialGradient id="ng" cx="35%" cy="30%" r="80%"><stop offset="0" stop-color="#5C7CB4"/><stop offset="0.5" stop-color="#27457E"/><stop offset="1" stop-color="#14284F"/></radialGradient></defs><circle cx="8.200" cy="8.200" r="8" fill="url(#ng)"/><text x="4" y="13" font-family="Liberation Serif, serif" font-weight="bold" font-size="15" fill="#fff">a</text></svg><svg style="left:959px;top:744px" width="19" height="19"><path d="M1.500 6.500h3.500l5-5v15l-5-5h-3.500z" fill="#E9E9EC" stroke="#7E7E86" stroke-width="1"/><path d="M5 6.500v5" stroke="#A8A8B0"/><path d="M11.500 7c1 1.200 1 2.800 0 4M13.300 5.300c1.900 2.300 1.900 5.100 0 7.400M15.200 3.800c2.600 3.200 2.600 7.200 0 10.400" fill="none" stroke="#2FA044" stroke-width="1.300"/></svg>
<span class="t s" style="left:21.8px;top:5.3px;font-size:14px;color:#fff;font-weight:bold;transform:scaleX(0.939);text-shadow:1px 1px 0 #1B3C8C;">Grapher View</span>
<span class="t s" style="left:5.0px;top:29.0px;font-size:11px;transform:scaleX(0.959);">File</span>
<span class="t s" style="left:33.0px;top:29.0px;font-size:11px;transform:scaleX(0.949);">Edit</span>
<span class="t s" style="left:63.8px;top:29.0px;font-size:11px;transform:scaleX(0.905);">View</span>
<span class="t s" style="left:97.8px;top:29.0px;font-size:11px;transform:scaleX(0.962);">Tools</span>
<span class="t s" style="left:9.2px;top:75.7px;font-size:12.5px;transform:scaleX(0.825);">Fourier Analysis</span>
<span class="t r" style="left:469.3px;top:94.3px;font-size:21px;">DiffMy12</span>
<span class="t r" style="left:442.3px;top:421.3px;font-size:21px;transform:scaleX(0.995);">Fourier Analysis</span>
<span class="t s" style="left:16.2px;top:143.7px;font-size:12.5px;transform:scaleX(0.863);">1</span>
<span class="t s" style="left:16.2px;top:163.7px;font-size:12.5px;transform:scaleX(0.863);">2</span>
<span class="t s" style="left:16.2px;top:183.7px;font-size:12.5px;transform:scaleX(0.863);">3</span>
<span class="t s" style="left:16.2px;top:203.7px;font-size:12.5px;transform:scaleX(0.863);">4</span>
<span class="t s" style="left:16.2px;top:223.7px;font-size:12.5px;transform:scaleX(0.863);">5</span>
<span class="t s" style="left:16.2px;top:243.7px;font-size:12.5px;transform:scaleX(0.863);">6</span>
<span class="t s" style="left:16.2px;top:263.7px;font-size:12.5px;transform:scaleX(0.863);">7</span>
<span class="t s" style="left:16.2px;top:283.7px;font-size:12.5px;transform:scaleX(0.863);">8</span>
<span class="t s" style="left:16.2px;top:303.7px;font-size:12.5px;transform:scaleX(0.863);">9</span>
<span class="t s" style="left:13.3px;top:323.7px;font-size:12.5px;transform:scaleX(0.877);">10</span>
<span class="t s" style="left:13.3px;top:343.7px;font-size:12.5px;transform:scaleX(0.940);">11</span>
<span class="t s" style="left:13.3px;top:363.7px;font-size:12.5px;transform:scaleX(0.877);">12</span>
<span class="t s" style="left:13.3px;top:383.7px;font-size:12.5px;transform:scaleX(0.877);">13</span>
<span class="t s" style="left:31.4px;top:142.7px;font-size:12.5px;transform:scaleX(0.824);">Fourier analysis for $26:</span>
<span class="t s" style="left:31.4px;top:162.7px;font-size:12.5px;transform:scaleX(0.850);">DC component:</span>
<span class="t s" style="left:108.1px;top:162.7px;font-size:12.5px;transform:scaleX(0.853);">0.154891</span>
<span class="t s" style="left:37.4px;top:202.7px;font-size:12.5px;transform:scaleX(0.853);">No.</span>
<span class="t s" style="left:57.1px;top:202.7px;font-size:12.5px;transform:scaleX(0.840);">Harmonics:</span>
<span class="t s" style="left:112.8px;top:202.7px;font-size:12.5px;transform:scaleX(0.881);">5,</span>
<span class="t s" style="left:124.7px;top:202.7px;font-size:12.5px;transform:scaleX(0.888);">THD:</span>
<span class="t s" style="left:154.4px;top:202.7px;font-size:12.5px;transform:scaleX(0.884);">0.957615</span>
<span class="t s" style="left:202.8px;top:202.7px;font-size:12.5px;transform:scaleX(0.713);">%,</span>
<span class="t s" style="left:216.0px;top:202.7px;font-size:12.5px;transform:scaleX(0.809);">Gridsize:</span>
<span class="t s" style="left:259.0px;top:202.7px;font-size:12.5px;transform:scaleX(0.875);">128,</span>
<span class="t s" style="left:283.4px;top:202.7px;font-size:12.5px;transform:scaleX(0.840);">Interpolation</span>
<span class="t s" style="left:343.9px;top:202.7px;font-size:12.5px;transform:scaleX(0.861);">Degree:</span>
<span class="t s" style="left:385.1px;top:202.7px;font-size:12.5px;transform:scaleX(0.86);">1</span>
<span class="t s" style="left:31.4px;top:242.7px;font-size:12.5px;transform:scaleX(0.836);">Harmonic</span>
<span class="t s" style="left:79.2px;top:242.7px;font-size:12.5px;transform:scaleX(0.857);">Frequency</span>
<span class="t s" style="left:141.3px;top:242.7px;font-size:12.5px;transform:scaleX(0.862);">Magnitude</span>
<span class="t s" style="left:203.3px;top:242.7px;font-size:12.5px;transform:scaleX(0.860);">Phase</span>
<span class="t s" style="left:257.4px;top:242.7px;font-size:12.5px;transform:scaleX(0.843);">Norm.</span>
<span class="t s" style="left:288.9px;top:242.7px;font-size:12.5px;transform:scaleX(0.867);">Mag</span>
<span class="t s" style="left:320.9px;top:242.7px;font-size:12.5px;transform:scaleX(0.843);">Norm.</span>
<span class="t s" style="left:352.7px;top:242.7px;font-size:12.5px;transform:scaleX(0.860);">Phase</span>
<span class="t s" style="left:31.4px;top:262.7px;font-size:12.5px;transform:scaleX(0.735);">--------</span>
<span class="t s" style="left:58.4px;top:262.7px;font-size:12.5px;transform:scaleX(0.734);">---------</span>
<span class="t s" style="left:97.4px;top:262.7px;font-size:12.5px;transform:scaleX(0.734);">---------</span>
<span class="t s" style="left:136.4px;top:262.7px;font-size:12.5px;transform:scaleX(0.744);">-----</span>
<span class="t s" style="left:175.4px;top:262.7px;font-size:12.5px;transform:scaleX(0.734);">---------</span>
<span class="t s" style="left:214.4px;top:262.7px;font-size:12.5px;transform:scaleX(0.731);">-----------</span>
<span class="t s" style="left:34.4px;top:282.7px;font-size:12.5px;transform:scaleX(0.86);">1</span>
<span class="t s" style="left:61.0px;top:282.7px;font-size:12.5px;transform:scaleX(0.884);">1000</span>
<span class="t s" style="left:112.4px;top:282.7px;font-size:12.5px;transform:scaleX(0.834);">9.24471</span>
<span class="t s" style="left:169.0px;top:282.7px;font-size:12.5px;transform:scaleX(0.858);">-1.1407</span>
<span class="t s" style="left:223.1px;top:282.7px;font-size:12.5px;transform:scaleX(0.86);">1</span>
<span class="t s" style="left:265.4px;top:282.7px;font-size:12.5px;transform:scaleX(0.935);">0</span>
<span class="t s" style="left:34.4px;top:302.7px;font-size:12.5px;transform:scaleX(0.892);">2</span>
<span class="t s" style="left:61.0px;top:302.7px;font-size:12.5px;transform:scaleX(0.884);">2000</span>
<span class="t s" style="left:112.4px;top:302.7px;font-size:12.5px;transform:scaleX(0.866);">0.0046694</span>
<span class="t s" style="left:175.1px;top:302.7px;font-size:12.5px;transform:scaleX(0.863);">171.279</span>
<span class="t s" style="left:232.2px;top:302.7px;font-size:12.5px;transform:scaleX(0.873);">0.000505088</span>
<span class="t s" style="left:301.7px;top:302.7px;font-size:12.5px;transform:scaleX(0.871);">172.42</span>
<span class="t s" style="left:34.4px;top:322.7px;font-size:12.5px;transform:scaleX(0.892);">3</span>
<span class="t s" style="left:61.0px;top:322.7px;font-size:12.5px;transform:scaleX(0.884);">3000</span>
<span class="t s" style="left:112.4px;top:322.7px;font-size:12.5px;transform:scaleX(0.866);">0.0549728</span>
<span class="t s" style="left:174.9px;top:322.7px;font-size:12.5px;transform:scaleX(0.874);">5.5316</span>
<span class="t s" style="left:229.1px;top:322.7px;font-size:12.5px;transform:scaleX(0.866);">0.0059464</span>
<span class="t s" style="left:291.6px;top:322.7px;font-size:12.5px;transform:scaleX(0.890);">6.67226</span>
<span class="t s" style="left:34.4px;top:342.7px;font-size:12.5px;transform:scaleX(0.892);">4</span>
<span class="t s" style="left:61.0px;top:342.7px;font-size:12.5px;transform:scaleX(0.884);">4000</span>
<span class="t s" style="left:112.4px;top:342.7px;font-size:12.5px;transform:scaleX(0.860);">0.00300066</span>
<span class="t s" style="left:178.2px;top:342.7px;font-size:12.5px;transform:scaleX(0.847);">-26.067</span>
<span class="t s" style="left:232.2px;top:342.7px;font-size:12.5px;transform:scaleX(0.851);">0.000324581</span>
<span class="t s" style="left:301.4px;top:342.7px;font-size:12.5px;transform:scaleX(0.847);">-24.927</span>
<span class="t s" style="left:34.4px;top:362.7px;font-size:12.5px;transform:scaleX(0.892);">5</span>
<span class="t s" style="left:61.0px;top:362.7px;font-size:12.5px;transform:scaleX(0.884);">5000</span>
<span class="t s" style="left:112.4px;top:362.7px;font-size:12.5px;transform:scaleX(0.866);">0.0691703</span>
<span class="t s" style="left:175.1px;top:362.7px;font-size:12.5px;transform:scaleX(0.868);">177.74</span>
<span class="t s" style="left:229.1px;top:362.7px;font-size:12.5px;transform:scaleX(0.871);">0.00748215</span>
<span class="t s" style="left:295.4px;top:362.7px;font-size:12.5px;transform:scaleX(0.841);">178.881</span>
<span class="t r" style="left:28.7px;top:446.1px;font-size:13.3px;transform:scaleX(0.925);">10</span>
<span class="t r" style="left:34.5px;top:486.1px;font-size:13.3px;transform:scaleX(0.977);">8</span>
<span class="t r" style="left:34.5px;top:529.1px;font-size:13.3px;transform:scaleX(0.977);">6</span>
<span class="t r" style="left:34.5px;top:572.1px;font-size:13.3px;transform:scaleX(0.977);">4</span>
<span class="t r" style="left:34.5px;top:615.1px;font-size:13.3px;transform:scaleX(0.977);">2</span>
<span class="t r" style="left:34.5px;top:658.1px;font-size:13.3px;transform:scaleX(0.977);">0</span>
<span class="t r" style="left:45.5px;top:674.1px;font-size:13.3px;transform:scaleX(0.977);">0</span>
<span class="t r" style="left:203.5px;top:674.1px;font-size:13.3px;transform:scaleX(0.978);">1k</span>
<span class="t r" style="left:364.5px;top:674.1px;font-size:13.3px;transform:scaleX(0.978);">2k</span>
<span class="t r" style="left:525.5px;top:674.1px;font-size:13.3px;transform:scaleX(0.978);">3k</span>
<span class="t r" style="left:686.5px;top:674.1px;font-size:13.3px;transform:scaleX(0.978);">4k</span>
<span class="t r" style="left:847.5px;top:674.1px;font-size:13.3px;transform:scaleX(0.978);">5k</span>
<span class="t r" style="left:1006.0px;top:674.1px;font-size:13.3px;transform:scaleX(1.015);">6k</span>
<span class="t r" style="left:483.5px;top:694.7px;font-size:16px;transform:scaleX(0.952);">Frequency (Hz)</span>
<span class="t r" style="left:0.0px;top:-14.3px;font-size:16px;left:5.75px;top:596.5px;transform-origin:0 0;transform:rotate(-90deg);">Voltage (V)</span>
<span class="t s" style="left:1.5px;top:723.0px;font-size:11px;transform:scaleX(0.956);">Selected Diagram:</span>
<span class="t s" style="left:94.5px;top:723.0px;font-size:11px;transform:scaleX(0.977);">Fourier Analysis</span>
<span class="t s" style="left:25.8px;top:742.8px;font-size:17.3px;color:#fff;font-weight:bold;font-style:italic;transform:scaleX(0.939);text-shadow:1px 1px 1px #1B5A1B;-webkit-text-stroke:0;">пуск</span>
<span class="t s" style="left:125.5px;top:748.0px;font-size:11px;color:#fff;transform:scaleX(1.015);">DiffMy12 - Multisim - [...</span>
<span class="t s" style="left:285.3px;top:747.0px;font-size:11px;color:#fff;transform:scaleX(1.006);">Расчёт бестрансфор...</span>
<span class="t s" style="left:886.0px;top:747.0px;font-size:11px;color:#fff;transform:scaleX(0.785);">EN</span>
<span class="t s" style="left:985.0px;top:747.0px;font-size:11px;transform:scaleX(1.074);">8:25</span>
</div>
</body></html>
